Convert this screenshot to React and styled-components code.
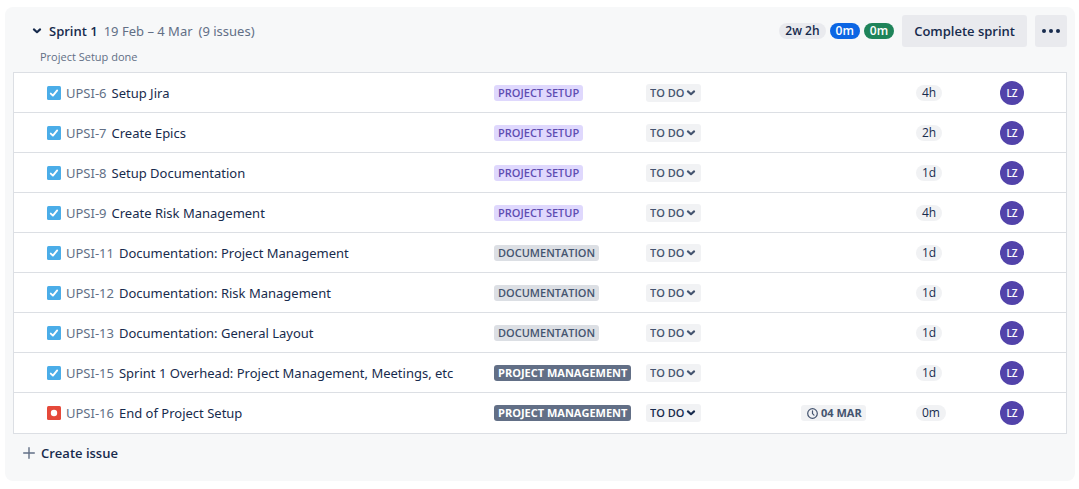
import React from "react";
import styled, { createGlobalStyle } from "styled-components";

const GlobalStyle = createGlobalStyle`
  *, *::before, *::after { box-sizing: border-box; }
  body {
    margin: 0;
    background: #ffffff;
    color: #172b4d;
    font-family: "Open Sans", "Noto Sans", sans-serif;
    font-size: 13px;
    line-height: 20px;
  }
  button, select { font: inherit; color: inherit; }
`;

const Page = styled.main`
  padding: 7px 4px 8px 5px;
`;

const Panel = styled.section`
  padding: 8px;
  border-radius: 8px;
  background: #f7f8f9;
`;

const Header = styled.header`
  display: flex;
  align-items: center;
  gap: 6px;
`;

const Toggle = styled.button`
  display: flex;
  align-items: center;
  gap: 7px;
  margin: 0;
  padding: 0 0 0 19px;
  border: 0;
  background: none;
  font-weight: 600;
  cursor: pointer;
`;

const HeaderText = styled.span`
  color: #626f86;
  font-family: "Noto Sans", sans-serif;
`;

const HeaderActions = styled.div`
  display: flex;
  align-items: center;
  gap: 8px;
  margin-left: auto;
`;

const Totals = styled.div`
  display: flex;
  gap: 4px;
`;

const pillColors = {
  plain: ["#f1f2f4", "#172b4d"],
  todo: ["#e9eaee", "#172b4d"],
  progress: ["#0c66e4", "#ffffff"],
  done: ["#1f845a", "#ffffff"],
};

const Pill = styled.span`
  justify-self: start;
  padding: 0 6px;
  border-radius: 8px;
  background: ${({ $tone }) => pillColors[$tone][0]};
  color: ${({ $tone }) => pillColors[$tone][1]};
  font-size: 12px;
  font-weight: ${({ $tone }) => ($tone === "plain" ? 400 : 600)};
  line-height: 16px;
`;

const ActionButton = styled.button`
  display: flex;
  align-items: center;
  justify-content: center;
  min-width: 32px;
  height: 32px;
  padding: 0 ${({ $icon }) => ($icon ? 0 : 12)}px;
  border: 0;
  border-radius: 3px;
  background: #e9eaee;
  font-weight: 600;
  cursor: pointer;
`;

const Goal = styled.p`
  margin: 0;
  padding: 2px 27px 7px;
  color: #626f86;
  font-size: 11px;
  line-height: 16px;
`;

const IssueList = styled.ul`
  margin: 0;
  padding: 0;
  border: 1px solid #dcdfe4;
  background: #ffffff;
  list-style: none;
`;

const IssueRow = styled.li`
  display: grid;
  grid-template-columns: minmax(0, 1fr) 152px 155px 115px 84px 24px;
  align-items: center;
  height: 40px;
  padding: 0 42px 0 33px;
  border-bottom: 1px solid #dcdfe4;

  &:last-child { border-bottom: 0; }
`;

const Summary = styled.div`
  display: flex;
  align-items: center;
  gap: 5px;
  min-width: 0;
  font-family: "Noto Sans", sans-serif;
  white-space: nowrap;
`;

const IssueKey = styled.a`
  color: #626f86;
  text-decoration: none;
`;

const epicStyles = {
  "Project Setup": ["#dfd8fd", "#5e4db2", 600],
  Documentation: ["#dcdfe4", "#44546f", 600],
  "Project Management": ["#626f86", "#ffffff", 700],
};

const Epic = styled.span`
  justify-self: start;
  padding: 0 4px;
  border-radius: 3px;
  background: ${({ $name }) => epicStyles[$name][0]};
  color: ${({ $name }) => epicStyles[$name][1]};
  font-size: 11px;
  font-weight: ${({ $name }) => epicStyles[$name][2]};
  line-height: 16px;
  text-transform: uppercase;
  white-space: nowrap;
`;

const StatusBox = styled.div`
  display: grid;
  grid-template-columns: 1fr 10px;
  align-items: center;
  justify-self: start;
  width: 55px;
  height: 18px;
  padding-right: 5px;
  border-radius: 3px;
  background: #f1f2f4;
  color: ${({ $strong }) => ($strong ? "#172b4d" : "#44546f")};
`;

const StatusSelect = styled.select`
  grid-area: 1 / 1 / 2 / 3;
  height: 18px;
  padding: 0 0 0 4px;
  border: 0;
  background: transparent;
  appearance: none;
  font-size: 11px;
  font-weight: 600;
  line-height: 18px;
`;

const StatusArrow = styled.span`
  display: flex;
  grid-area: 1 / 2 / 2 / 3;
  pointer-events: none;
`;

const DueDate = styled.time`
  display: flex;
  align-items: center;
  justify-self: start;
  gap: 3px;
  padding: 0 4px 0 6px;
  border-radius: 3px;
  background: #f1f2f4;
  color: #44546f;
  font-size: 11px;
  font-weight: 700;
  line-height: 16px;
`;

const Avatar = styled.span`
  display: grid;
  place-items: center;
  height: 24px;
  border-radius: 50%;
  background: #5243aa;
  color: #ffffff;
  font-size: 10px;
  font-weight: 600;
  line-height: 12px;
`;

const CreateButton = styled.button`
  display: flex;
  align-items: center;
  gap: 6px;
  margin: 9px 0 10px;
  padding: 0 10px;
  border: 0;
  background: none;
  font-weight: 600;
  cursor: pointer;
`;

const Chevron = () => (
  <svg width="10" height="10" viewBox="0 0 10 10" fill="none" stroke="currentColor" strokeWidth="2.1" strokeLinecap="round" strokeLinejoin="round" aria-hidden="true">
    <path d="M1.9 3.4 5 6.2 8.1 3.4" />
  </svg>
);

const TypeIcon = ({ type }) => (
  <svg width="14" height="14" viewBox="0 0 14 14" role="img" aria-label={type}>
    <rect width="14" height="14" rx="1.5" fill={type === "Task" ? "#4bade8" : "#e5493a"} />
    {type === "Task" ? (
      <path d="M3.8 7.6 5.9 9.6 10.2 4.4" fill="none" stroke="#fff" strokeWidth="1.9" strokeLinecap="round" strokeLinejoin="round" />
    ) : (
      <circle cx="7" cy="7" r="3.2" fill="#fff" />
    )}
  </svg>
);

const Clock = () => (
  <svg width="11" height="11" viewBox="0 0 11 11" fill="none" stroke="currentColor" strokeWidth="1.2" strokeLinecap="round" aria-hidden="true">
    <circle cx="5.5" cy="5.5" r="4.8" />
    <path d="M5.5 2.8V5.6L7 7.1" />
  </svg>
);

const issues = [
  { key: "UPSI-6", title: "Setup Jira", epic: "Project Setup", estimate: "4h" },
  { key: "UPSI-7", title: "Create Epics", epic: "Project Setup", estimate: "2h" },
  { key: "UPSI-8", title: "Setup Documentation", epic: "Project Setup", estimate: "1d" },
  { key: "UPSI-9", title: "Create Risk Management", epic: "Project Setup", estimate: "4h" },
  { key: "UPSI-11", title: "Documentation: Project Management", epic: "Documentation", estimate: "1d" },
  { key: "UPSI-12", title: "Documentation: Risk Management", epic: "Documentation", estimate: "1d" },
  { key: "UPSI-13", title: "Documentation: General Layout", epic: "Documentation", estimate: "1d" },
  { key: "UPSI-15", title: "Sprint 1 Overhead: Project Management, Meetings, etc", epic: "Project Management", estimate: "1d" },
  { key: "UPSI-16", title: "End of Project Setup", epic: "Project Management", estimate: "0m", due: "04 MAR", type: "Bug" },
];

const Issue = ({ issue }) => (
  <IssueRow>
    <Summary>
      <TypeIcon type={issue.type || "Task"} />
      <IssueKey href={`#${issue.key}`}>{issue.key}</IssueKey>
      <span>{issue.title}</span>
    </Summary>
    <Epic $name={issue.epic}>{issue.epic}</Epic>
    <StatusBox $strong={issue.type === "Bug"}>
      <StatusSelect aria-label={`Status of ${issue.key}`} defaultValue="TO DO">
        <option>TO DO</option>
      </StatusSelect>
      <StatusArrow><Chevron /></StatusArrow>
    </StatusBox>
    {issue.due ? <DueDate dateTime="03-04"><Clock />{issue.due}</DueDate> : <span />}
    <Pill $tone="plain">{issue.estimate}</Pill>
    <Avatar>LZ</Avatar>
  </IssueRow>
);

export default function App() {
  return (
    <Page>
      <GlobalStyle />
      <Panel>
        <Header>
          <Toggle aria-expanded="true"><Chevron />Sprint 1</Toggle>
          <HeaderText>19 Feb – 4 Mar</HeaderText>
          <HeaderText>(9 issues)</HeaderText>
          <HeaderActions>
            <Totals>
              <Pill $tone="todo">2w 2h</Pill>
              <Pill $tone="progress">0m</Pill>
              <Pill $tone="done">0m</Pill>
            </Totals>
            <ActionButton>Complete sprint</ActionButton>
            <ActionButton $icon aria-label="More actions">
              <svg width="18" height="4" viewBox="0 0 18 4" fill="currentColor" aria-hidden="true">
                <circle cx="2" cy="2" r="2" />
                <circle cx="9" cy="2" r="2" />
                <circle cx="16" cy="2" r="2" />
              </svg>
            </ActionButton>
          </HeaderActions>
        </Header>
        <Goal>Project Setup done</Goal>
        <IssueList>
          {issues.map((issue) => <Issue key={issue.key} issue={issue} />)}
        </IssueList>
        <CreateButton>
          <svg width="12" height="12" viewBox="0 0 12 12" stroke="#626f86" strokeWidth="1.4" strokeLinecap="round" aria-hidden="true">
            <path d="M6 .7V11.3M.7 6H11.3" />
          </svg>
          Create issue
        </CreateButton>
      </Panel>
    </Page>
  );
}
